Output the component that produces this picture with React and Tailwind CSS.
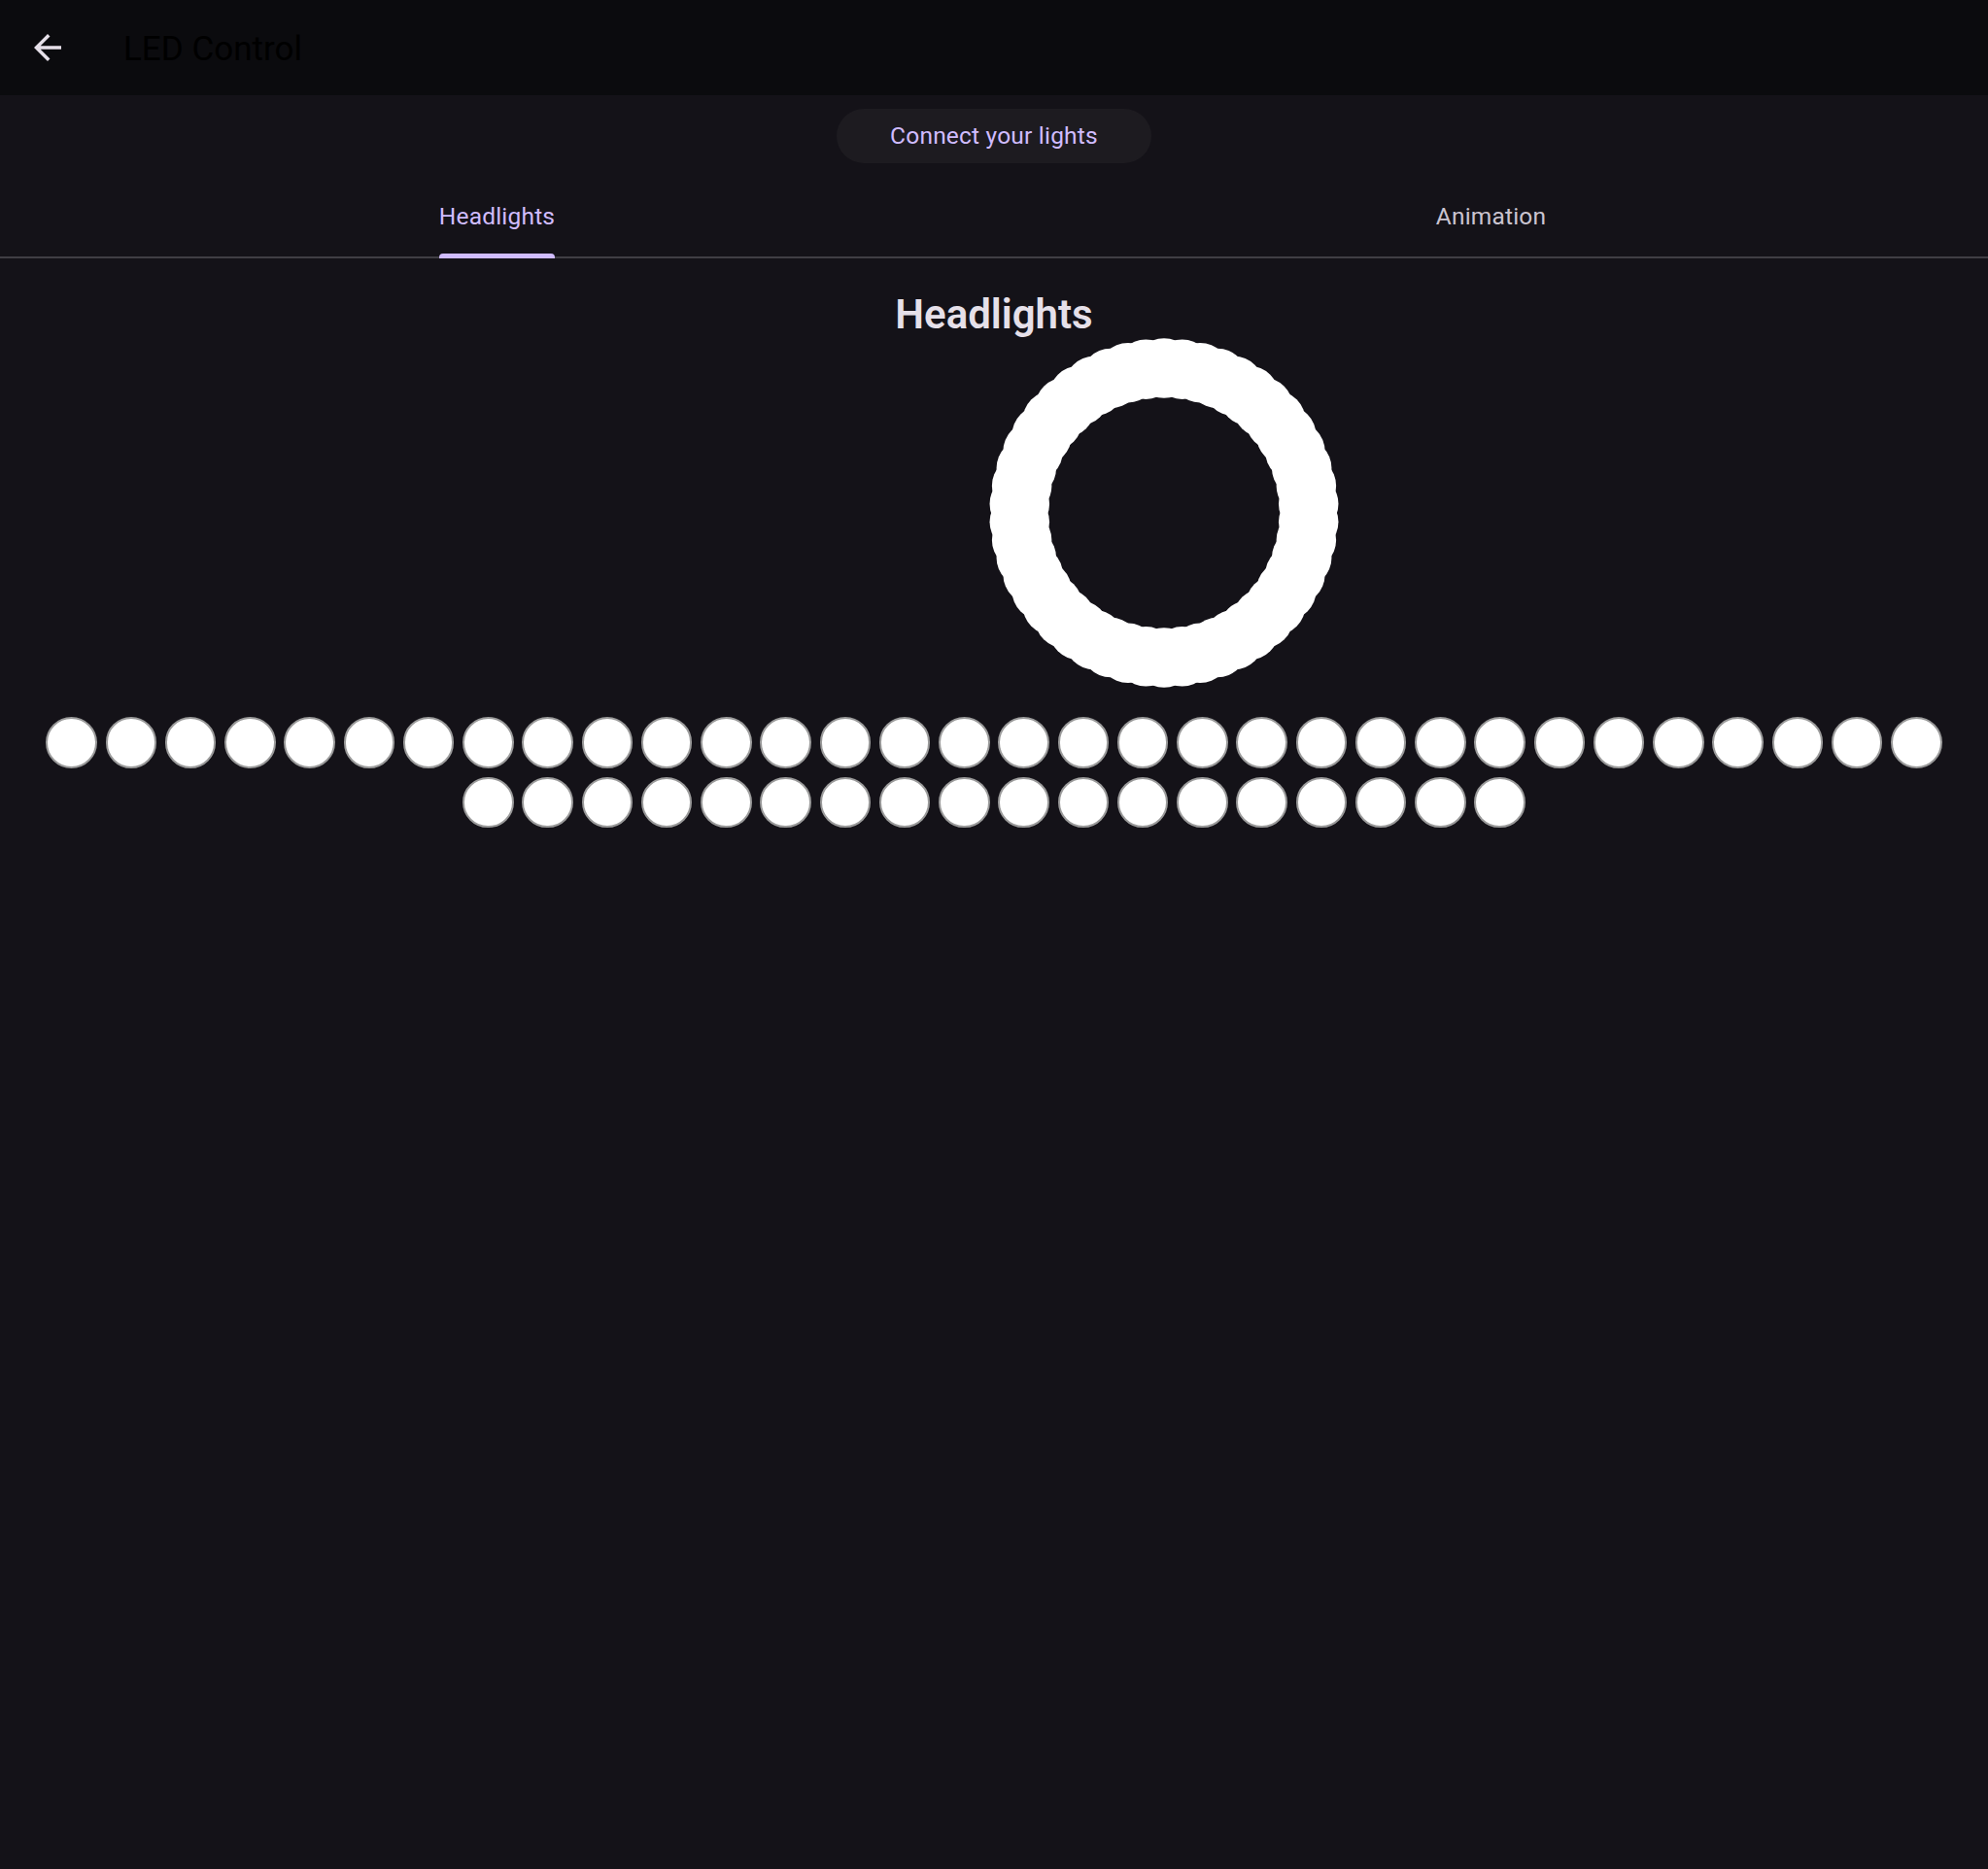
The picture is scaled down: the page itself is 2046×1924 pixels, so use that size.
import React from "react";

const font = { fontFamily: "Roboto, 'Noto Sans', 'Liberation Sans', sans-serif" };

function Ring() {
  const n = 50;
  const R = 149;
  const r = 30.75;
  const c = 180;
  const dots = [];
  for (let i = 0; i < n; i++) {
    const a = (i / n) * Math.PI * 2 - Math.PI / 2;
    dots.push(
      <circle key={i} cx={c + R * Math.cos(a)} cy={c + R * Math.sin(a)} r={r} fill="#ffffff" />
    );
  }
  return (
    <svg width="360" height="360" viewBox="0 0 360 360">
      {dots}
    </svg>
  );
}

function Led() {
  return <div className="w-[52.5px] h-[52.5px] rounded-full bg-white border-2 border-[#9a9a9a] shrink-0" />;
}

export default function App() {
  return (
    <div className="min-h-screen w-full bg-[#141218]" style={font}>
      <header className="h-[98px] bg-[#0b0b0e] flex items-center">
        <div className="ml-[28px] w-[42px] h-[42px] flex items-center justify-center">
          <svg width="42" height="42" viewBox="0 0 24 24">
            <path d="M20 11H7.83l5.59-5.59L12 4l-8 8 8 8 1.41-1.41L7.83 13H20v-2z" fill="#e6e0e9" />
          </svg>
        </div>
        <h1 className="ml-[57px] mt-[2px] text-[35px] text-black leading-none">LED Control</h1>
      </header>

      <div className="pt-[14px] flex justify-center">
        <button className="w-[324px] h-[56px] rounded-full bg-[#1d1b20] text-[#d0bcff] text-[24.5px] font-normal tracking-[0.2px] flex items-center justify-center pt-[1px]">
          Connect your lights
        </button>
      </div>

      <div className="mt-[14px]">
        <div className="grid grid-cols-2 h-[84px]">
          <div className="flex justify-center">
            <div className="flex flex-col">
              <div className="flex-1 flex items-center justify-center pt-[4px] text-[24.5px] font-normal tracking-[0.2px] text-[#d0bcff]">Headlights</div>
              <div className="relative z-10 h-[5px] rounded-t-[4px] bg-[#d0bcff]" />
            </div>
          </div>
          <div className="flex justify-center">
            <div className="flex flex-col">
              <div className="flex-1 flex items-center justify-center pt-[4px] text-[24.5px] font-normal tracking-[0.2px] text-[#cac4d0]">Animation</div>
              <div className="h-[5px]" />
            </div>
          </div>
        </div>
        <div className="h-[2px] -mt-[2px] bg-[#403e44]" />
      </div>

      <h2 className="mt-[33px] text-center text-[42px] leading-[49px] font-semibold text-[#e6e0e9]">Headlights</h2>

      <div className="flex justify-center">
        <div className="ml-[350px] w-[360px] h-[360px]">
          <Ring />
        </div>
      </div>

      <div className="mt-[30px] flex flex-col items-center gap-[9px]">
        <div className="flex gap-[8.75px]">
          {Array.from({ length: 32 }).map((_, i) => <Led key={i} />)}
        </div>
        <div className="flex gap-[8.75px]">
          {Array.from({ length: 18 }).map((_, i) => <Led key={i} />)}
        </div>
      </div>
    </div>
  );
}
